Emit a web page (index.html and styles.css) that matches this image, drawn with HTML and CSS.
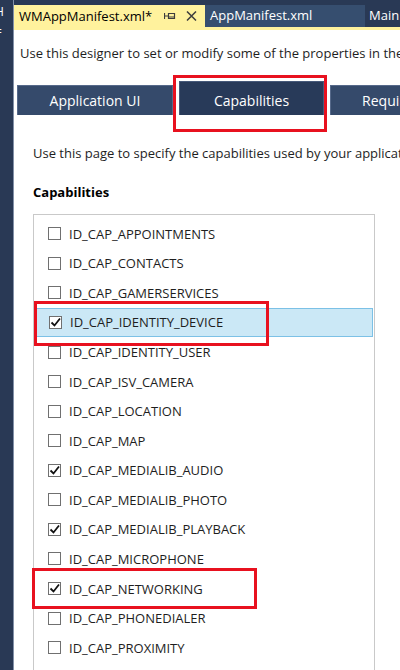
FILE: index.html
```html
<!DOCTYPE html>
<html>
<head>
<meta charset="utf-8">
<link rel="stylesheet" href="styles.css">
</head>
<body>
<div class="app">
  <div class="side">
    <span class="side-ch c1">H</span>
    <span class="side-ch c2">=</span>
  </div>
  <div class="main">
    <div class="doctabs">
      <div class="doctab active">
        <span class="doctab-title">WMAppManifest.xml*</span>
        <svg class="pin" width="12" height="8" viewBox="0 0 12 8"><path d="M0.5 1v6M0.5 4h4M4.5 1.5h6v5h-6z M4.5 5h6" fill="none" stroke="#3d3d3d" stroke-width="1.2"/></svg>
        <svg class="close" width="11" height="10" viewBox="0 0 11 10"><path d="M1 0.5l9 9M10 0.5l-9 9" stroke="#3d3d3d" stroke-width="1.5"/></svg>
      </div>
      <div class="doctab second">AppManifest.xml</div>
      <div class="doctab plain">MainPage.xaml</div>
    </div>
    <div class="content">
      <p class="intro">Use this designer to set or modify some of the properties in the Windows Phone app manifest file.</p>
      <div class="pagetabs">
        <div class="ptab">Application UI</div>
        <div class="ptab sel">Capabilities<span class="hl hl-tab"></span></div>
        <div class="ptab">Requirements</div>
      </div>
      <p class="desc">Use this page to specify the capabilities used by your application.</p>
      <h3 class="head">Capabilities</h3>
      <div class="list">
        <div class="row"><span class="cb"></span>ID_CAP_APPOINTMENTS</div>
        <div class="row"><span class="cb"></span>ID_CAP_CONTACTS</div>
        <div class="row"><span class="cb"></span>ID_CAP_GAMERSERVICES</div>
        <div class="row selected"><span class="cb on"><svg width="11" height="11" viewBox="0 0 11 11"><path d="M1.5 5.5l3 3 5.5-7" fill="none" stroke="#111" stroke-width="1.8"/></svg></span>ID_CAP_IDENTITY_DEVICE<span class="hl hl-row1"></span></div>
        <div class="row"><span class="cb"></span>ID_CAP_IDENTITY_USER</div>
        <div class="row"><span class="cb"></span>ID_CAP_ISV_CAMERA</div>
        <div class="row"><span class="cb"></span>ID_CAP_LOCATION</div>
        <div class="row"><span class="cb"></span>ID_CAP_MAP</div>
        <div class="row"><span class="cb on"><svg width="11" height="11" viewBox="0 0 11 11"><path d="M1.5 5.5l3 3 5.5-7" fill="none" stroke="#111" stroke-width="1.8"/></svg></span>ID_CAP_MEDIALIB_AUDIO</div>
        <div class="row"><span class="cb"></span>ID_CAP_MEDIALIB_PHOTO</div>
        <div class="row"><span class="cb on"><svg width="11" height="11" viewBox="0 0 11 11"><path d="M1.5 5.5l3 3 5.5-7" fill="none" stroke="#111" stroke-width="1.8"/></svg></span>ID_CAP_MEDIALIB_PLAYBACK</div>
        <div class="row"><span class="cb"></span>ID_CAP_MICROPHONE</div>
        <div class="row"><span class="cb on"><svg width="11" height="11" viewBox="0 0 11 11"><path d="M1.5 5.5l3 3 5.5-7" fill="none" stroke="#111" stroke-width="1.8"/></svg></span>ID_CAP_NETWORKING<span class="hl hl-row2"></span></div>
        <div class="row"><span class="cb"></span>ID_CAP_PHONEDIALER</div>
        <div class="row"><span class="cb"></span>ID_CAP_PROXIMITY</div>
        <div class="row"><span class="cb"></span>ID_CAP_PUSH_NOTIFICATION</div>
      </div>
    </div>
  </div>
</div>
</body>
</html>
```
FILE: styles.css
```css
html, body {
  margin: 0;
  padding: 0;
  width: 400px;
  height: 670px;
  overflow: hidden;
  background: #ffffff;
}
body {
  font-family: "Open Sans", "Noto Sans", sans-serif;
  font-size: 13px;
  color: #1e1e1e;
}
.app {
  display: flex;
  height: 670px;
}
.side {
  width: 13px;
  flex: none;
  background: #293955;
  border-right: 1px solid #8391a8;
  position: relative;
  overflow: hidden;
}
.side-ch {
  position: absolute;
  color: #ffffff;
  font-size: 12px;
  left: -5px;
}
.c1 { top: 3px; }
.c2 { top: 23px; }
.main {
  flex: 1;
  min-width: 0;
  display: flex;
  flex-direction: column;
}
.doctabs {
  background: #293955;
  padding-top: 5px;
  height: 22px;
  display: flex;
  border-bottom: 3px solid #fff29d;
  white-space: nowrap;
  overflow: hidden;
}
.doctab {
  height: 22px;
  line-height: 21px;
  font-size: 13px;
  color: #ffffff;
  background: #364e6f;
  padding: 0 0 0 5px;
  flex: none;
  box-sizing: border-box;
}
.doctab.second {
  width: 160px;
}
.doctab.plain {
  background: transparent;
  padding-left: 4px;
}
.doctab.active {
  background: #fff29d;
  color: #000000;
  width: 191px;
  padding: 0 0 0 5px;
  display: flex;
  align-items: center;
}
.doctab-title {
  flex: 1;
}
.pin {
  margin-right: 10px;
}
.close {
  margin-right: 8px;
}
.content {
  padding: 0 0 0 6px;
  flex: 1;
  min-height: 0;
}
.intro {
  margin: 14px 0 0 0;
  white-space: nowrap;
  line-height: 18px;
}
.pagetabs {
  display: flex;
  align-items: flex-end;
  margin: 20px 0 0 -3px;
  gap: 6px;
  white-space: nowrap;
  height: 33px;
}
.ptab {
  flex: none;
  height: 29px;
  line-height: 29px;
  background: #354a6b;
  border: 1px solid #56698a;
  border-bottom: none;
  color: #ffffff;
  text-align: center;
  width: 154px;
  font-size: 14px;
}
.ptab.sel {
  height: 33px;
  line-height: 37px;
  background: #283a59;
  width: 143px;
  position: relative;
  border-color: #46597a;
}
.desc {
  margin: 29px 0 0 13px;
  white-space: nowrap;
  line-height: 18px;
}
.head {
  margin: 21px 0 0 13px;
  font-size: 13px;
  font-weight: 700;
  line-height: 18px;
  color: #000;
}
.list {
  margin: 13px 0 0 13px;
  width: 340px;
  border: 1px solid #c9c9c9;
  border-bottom: none;
  padding-top: 4px;
  height: 470px;
}
.row {
  height: 29.57px;
  display: flex;
  align-items: center;
  padding-left: 14px;
  position: relative;
  white-space: nowrap;
  font-size: 13px;
  color: #1e1e1e;
}
.row.selected {
  background: #cbe8f6;
  margin: 0 1px 0 2px;
  padding-left: 12px;
  box-sizing: border-box;
  border: 1px solid #7cc1e6;
}
.cb {
  width: 13px;
  height: 13px;
  box-sizing: border-box;
  border: 1px solid #707070;
  background: #ffffff;
  margin-right: 8px;
  display: flex;
  align-items: center;
  justify-content: center;
  flex: none;
}
.hl {
  position: absolute;
  border: 3px solid #e8111f;
  box-sizing: border-box;
  pointer-events: none;
}
.hl-tab {
  left: -7px;
  top: -7px;
  width: 154px;
  height: 57px;
}
.hl-row1 {
  left: -3px;
  top: -8px;
  width: 235px;
  height: 45px;
}
.hl-row2 {
  left: -2px;
  top: -6px;
  width: 225px;
  height: 41px;
}
```
